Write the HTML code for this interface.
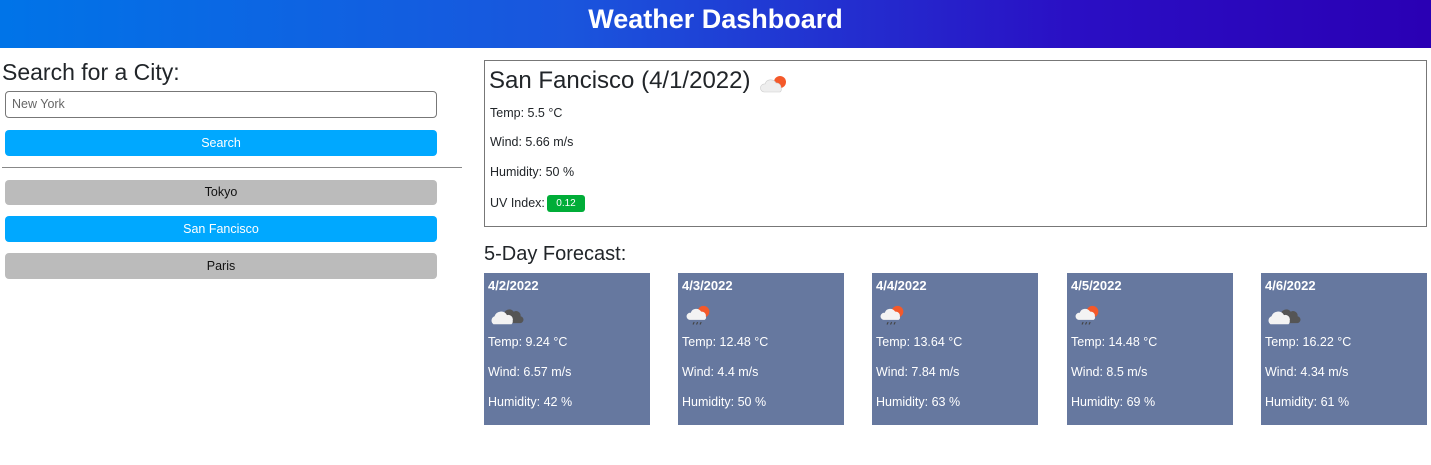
<!DOCTYPE html>
<html><head><meta charset="utf-8"><style>
*{box-sizing:border-box;margin:0;padding:0}
body{width:1431px;height:465px;background:#fff;font-family:"Liberation Sans",sans-serif;color:#212529;position:relative;overflow:hidden}
header{position:absolute;left:0;top:0;width:1431px;height:48px;background:linear-gradient(90deg,#0074e8 0%,#1a55dd 40%,#2a0fc4 75%,#2a00b4 100%);color:#fff;text-align:center;font-size:27px;font-weight:bold;line-height:38px}
.abs{position:absolute}
h2{position:absolute;font-weight:normal;color:#212529}
.btn{position:absolute;left:5px;width:432px;border-radius:4px;text-align:center;font-size:12.5px}
.card{position:absolute;top:273px;width:166px;height:152px;background:#66789f;color:#fff;font-size:12.5px}
.card b{position:absolute;left:4px;top:5px;font-size:13px}
.card span{position:absolute;left:4px}
.line{position:absolute;left:5px;font-size:12.5px}
</style></head><body>
<header>Weather Dashboard</header>
<h2 style="left:2px;top:59px;font-size:23px">Search for a City:</h2>
<div class="abs" style="left:5px;top:91px;width:432px;height:27px;border:1px solid #777;border-radius:4px;font-size:12.5px;color:#666;padding:5px 6px">New York</div>
<div class="btn" style="top:130px;height:26px;line-height:26px;background:#00a8ff;color:#fff">Search</div>
<div class="abs" style="left:2px;top:167px;width:460px;height:1px;background:#888"></div>
<div class="btn" style="top:180px;height:25px;line-height:25px;background:#bbb;color:#111">Tokyo</div>
<div class="btn" style="top:216px;height:26px;line-height:26px;background:#00a8ff;color:#fff">San Fancisco</div>
<div class="btn" style="top:253px;height:26px;line-height:26px;background:#bbb;color:#111">Paris</div>

<div class="abs" style="left:484px;top:60px;width:943px;height:167px;border:1px solid #777">
<div class="abs" style="left:4px;top:6px;font-size:24px">San Fancisco (4/1/2022)</div>
<svg class="abs" style="left:274px;top:11px" width="30" height="24" viewBox="0 0 30 24"><circle cx="21" cy="10" r="6" fill="#f4592a"/><path d="M5 20a4 4 0 0 1 1-8a6 6 0 0 1 11-1a4.5 4.5 0 0 1 5 5a3 3 0 0 1-1 4z" fill="#eee" stroke="#ccc" stroke-width=".6"/></svg>
<div class="line" style="top:135px">UV Index:</div>
<div class="abs" style="left:62px;top:134px;background:#00ad38;color:#fff;border-radius:3px;font-size:10px;width:38px;height:17px;line-height:17px;text-align:center">0.12</div>
<div class="line" style="top:45px">Temp: 5.5 °C</div>
<div class="line" style="top:74px">Wind: 5.66 m/s</div>
<div class="line" style="top:104px">Humidity: 50 %</div>
</div>
<h2 style="left:484px;top:243px;font-size:20px">5-Day Forecast:</h2>

<div class="card" style="left:484px"><b>4/2/2022</b><svg class="abs" style="left:6px;top:28px" width="34" height="26" viewBox="0 0 30 22"><path d="M12 12a5 5 0 0 1 9-3a4 4 0 0 1 6 4a3 3 0 0 1-1 6h-10z" fill="#555"/><path d="M3 20a4 4 0 0 1 1-7a6 6 0 0 1 11-1a4 4 0 0 1 5 5a3 3 0 0 1-1 3z" fill="#f3f3f3"/></svg><span style="top:62px">Temp: 9.24 °C</span><span style="top:92px">Wind: 6.57 m/s</span><span style="top:122px">Humidity: 42 %</span></div>
<div class="card" style="left:678px"><b>4/3/2022</b><svg class="abs" style="left:8px;top:28px" width="28" height="26" viewBox="0 0 24 22"><circle cx="15" cy="9" r="5" fill="#f4592a"/><path d="M3 16a3 3 0 0 1 1-6a5 5 0 0 1 9-1a3.5 3.5 0 0 1 4 4a2.5 2.5 0 0 1-1 3z" fill="#f3f3f3"/><path d="M7 18l-1 2M10 18l-1 2M13 18l-1 2" stroke="#444" stroke-width="1"/></svg><span style="top:62px">Temp: 12.48 °C</span><span style="top:92px">Wind: 4.4 m/s</span><span style="top:122px">Humidity: 50 %</span></div>
<div class="card" style="left:872px"><b>4/4/2022</b><svg class="abs" style="left:8px;top:28px" width="28" height="26" viewBox="0 0 24 22"><circle cx="15" cy="9" r="5" fill="#f4592a"/><path d="M3 16a3 3 0 0 1 1-6a5 5 0 0 1 9-1a3.5 3.5 0 0 1 4 4a2.5 2.5 0 0 1-1 3z" fill="#f3f3f3"/><path d="M7 18l-1 2M10 18l-1 2M13 18l-1 2" stroke="#444" stroke-width="1"/></svg><span style="top:62px">Temp: 13.64 °C</span><span style="top:92px">Wind: 7.84 m/s</span><span style="top:122px">Humidity: 63 %</span></div>
<div class="card" style="left:1067px"><b>4/5/2022</b><svg class="abs" style="left:8px;top:28px" width="28" height="26" viewBox="0 0 24 22"><circle cx="15" cy="9" r="5" fill="#f4592a"/><path d="M3 16a3 3 0 0 1 1-6a5 5 0 0 1 9-1a3.5 3.5 0 0 1 4 4a2.5 2.5 0 0 1-1 3z" fill="#f3f3f3"/><path d="M7 18l-1 2M10 18l-1 2M13 18l-1 2" stroke="#444" stroke-width="1"/></svg><span style="top:62px">Temp: 14.48 °C</span><span style="top:92px">Wind: 8.5 m/s</span><span style="top:122px">Humidity: 69 %</span></div>
<div class="card" style="left:1261px"><b>4/6/2022</b><svg class="abs" style="left:6px;top:28px" width="34" height="26" viewBox="0 0 30 22"><path d="M12 12a5 5 0 0 1 9-3a4 4 0 0 1 6 4a3 3 0 0 1-1 6h-10z" fill="#555"/><path d="M3 20a4 4 0 0 1 1-7a6 6 0 0 1 11-1a4 4 0 0 1 5 5a3 3 0 0 1-1 3z" fill="#f3f3f3"/></svg><span style="top:62px">Temp: 16.22 °C</span><span style="top:92px">Wind: 4.34 m/s</span><span style="top:122px">Humidity: 61 %</span></div>
</body></html>
